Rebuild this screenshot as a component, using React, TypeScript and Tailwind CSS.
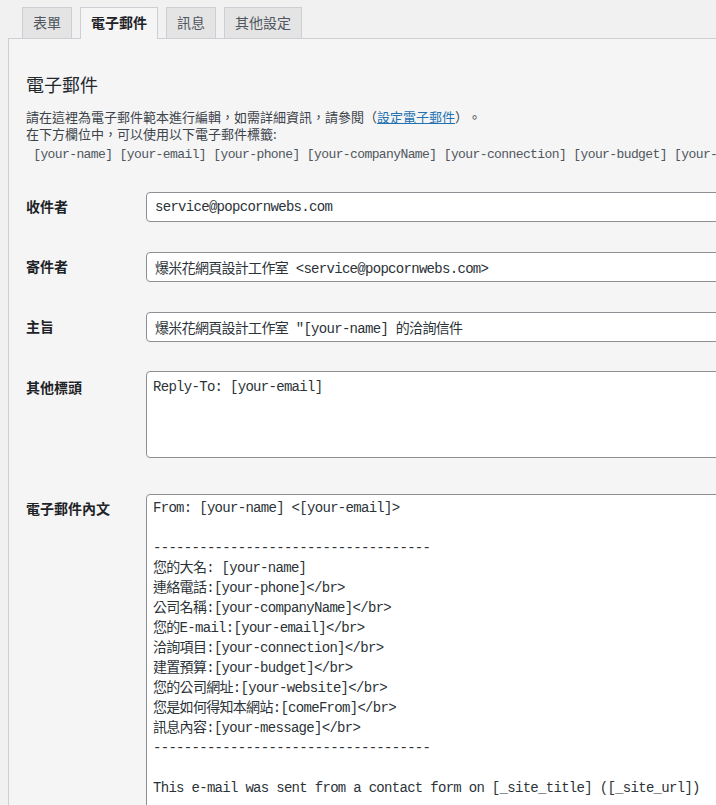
import React from "react";

const tabs = [
  { label: "表單", active: false },
  { label: "電子郵件", active: true },
  { label: "訊息", active: false },
  { label: "其他設定", active: false },
];

const mono = "font-['Liberation_Mono','Noto_Sans_CJK_TC',monospace]";

const body = [
  "From: [your-name] <[your-email]>",
  "",
  "------------------------------------",
  "您的大名: [your-name]",
  "連絡電話:[your-phone]</br>",
  "公司名稱:[your-companyName]</br>",
  "您的E-mail:[your-email]</br>",
  "洽詢項目:[your-connection]</br>",
  "建置預算:[your-budget]</br>",
  "您的公司網址:[your-website]</br>",
  "您是如何得知本網站:[comeFrom]</br>",
  "訊息內容:[your-message]</br>",
  "------------------------------------",
  "",
  "This e-mail was sent from a contact form on [_site_title] ([_site_url])",
].join("\n");

function Label({ children, pt }: { children: React.ReactNode; pt: string }) {
  return (
    <div className={`w-[120px] shrink-0 text-[14px] leading-[20px] font-semibold text-[#1d2327] ${pt}`}>
      {children}
    </div>
  );
}

function TextField({ label, value }: { label: string; value: string }) {
  return (
    <div className="flex items-start">
      <Label pt="pt-[4px]">{label}</Label>
      <input
        readOnly
        value={value}
        className={`flex-1 h-[30px] rounded-[4px] border border-[#8c8f94] bg-white px-[8px] text-[14px] tracking-[-0.7px] text-[#2c3338] outline-none ${mono}`}
      />
    </div>
  );
}

export default function App() {
  return (
    <div className="w-[716px] h-[805px] overflow-hidden bg-[#f1f1f1] font-['Noto_Sans_CJK_TC',sans-serif] [text-spacing-trim:space-all]">
      <div className="w-[1000px] pl-[8px] pt-[7px]">
        <ul className="relative z-10 flex items-start gap-[8px] pl-[14px]">
          {tabs.map((t) => (
            <li
              key={t.label}
              className={
                t.active
                  ? "h-[32px] border border-b-0 border-[#ccd0d4] bg-[#f5f5f5] px-[10px] text-[14px] leading-[29px] font-semibold text-[#1d2327]"
                  : "h-[31px] border border-b-0 border-[#ccd0d4] bg-[#e4e4e4] px-[10px] text-[14px] leading-[29px] text-[#50575e]"
              }
            >
              {t.label}
            </li>
          ))}
        </ul>
        <div className="-mt-px h-[900px] border border-[#ccd0d4] bg-[#f5f5f5] pl-[17px] pt-[33px]">
          <h2 className="text-[18px] leading-[24px] font-normal text-[#23282d]">電子郵件</h2>
          <p className="mt-[12px] text-[13px] leading-[17px] text-[#3c434a]">
            請在這裡為電子郵件範本進行編輯，如需詳細資訊，請參閱（
            <a className="text-[#2271b1] underline">設定電子郵件</a>
            ）。
            <br />
            在下方欄位中，可以使用以下電子郵件標籤:
          </p>
          <div className={`mt-[4px] whitespace-pre text-[13px] leading-[17px] tracking-[-0.6px] text-[#50575e] ${mono}`}>
            {" [your-name] [your-email] [your-phone] [your-companyName] [your-connection] [your-budget] [your-website] [comeFrom] [your-message]"}
          </div>

          <div className="mt-[29px] flex flex-col gap-[30px]">
            <TextField label="收件者" value="service@popcornwebs.com" />
            <TextField label="寄件者" value="爆米花網頁設計工作室 <service@popcornwebs.com>" />
            <div className="-mb-px">
              <TextField label="主旨" value={'爆米花網頁設計工作室 "[your-name] 的洽詢信件'} />
            </div>
            <div className="flex items-start">
              <Label pt="pt-[6px]">其他標頭</Label>
              <textarea
                readOnly
                value="Reply-To: [your-email]"
                className={`flex-1 h-[87px] resize-none rounded-[4px] border border-[#8c8f94] bg-white px-[6px] pt-[5px] text-[14px] leading-[20px] tracking-[-0.7px] text-[#2c3338] outline-none ${mono}`}
              />
            </div>
            <div className="mt-[6px] flex items-start">
              <Label pt="pt-[4px]">電子郵件內文</Label>
              <textarea
                readOnly
                wrap="off"
                value={body}
                className={`flex-1 h-[400px] resize-none overflow-hidden rounded-[4px] border border-[#8c8f94] bg-white px-[6px] pt-[3px] text-[14px] leading-[20px] tracking-[-0.7px] text-[#2c3338] outline-none ${mono}`}
              />
            </div>
          </div>
        </div>
      </div>
    </div>
  );
}
